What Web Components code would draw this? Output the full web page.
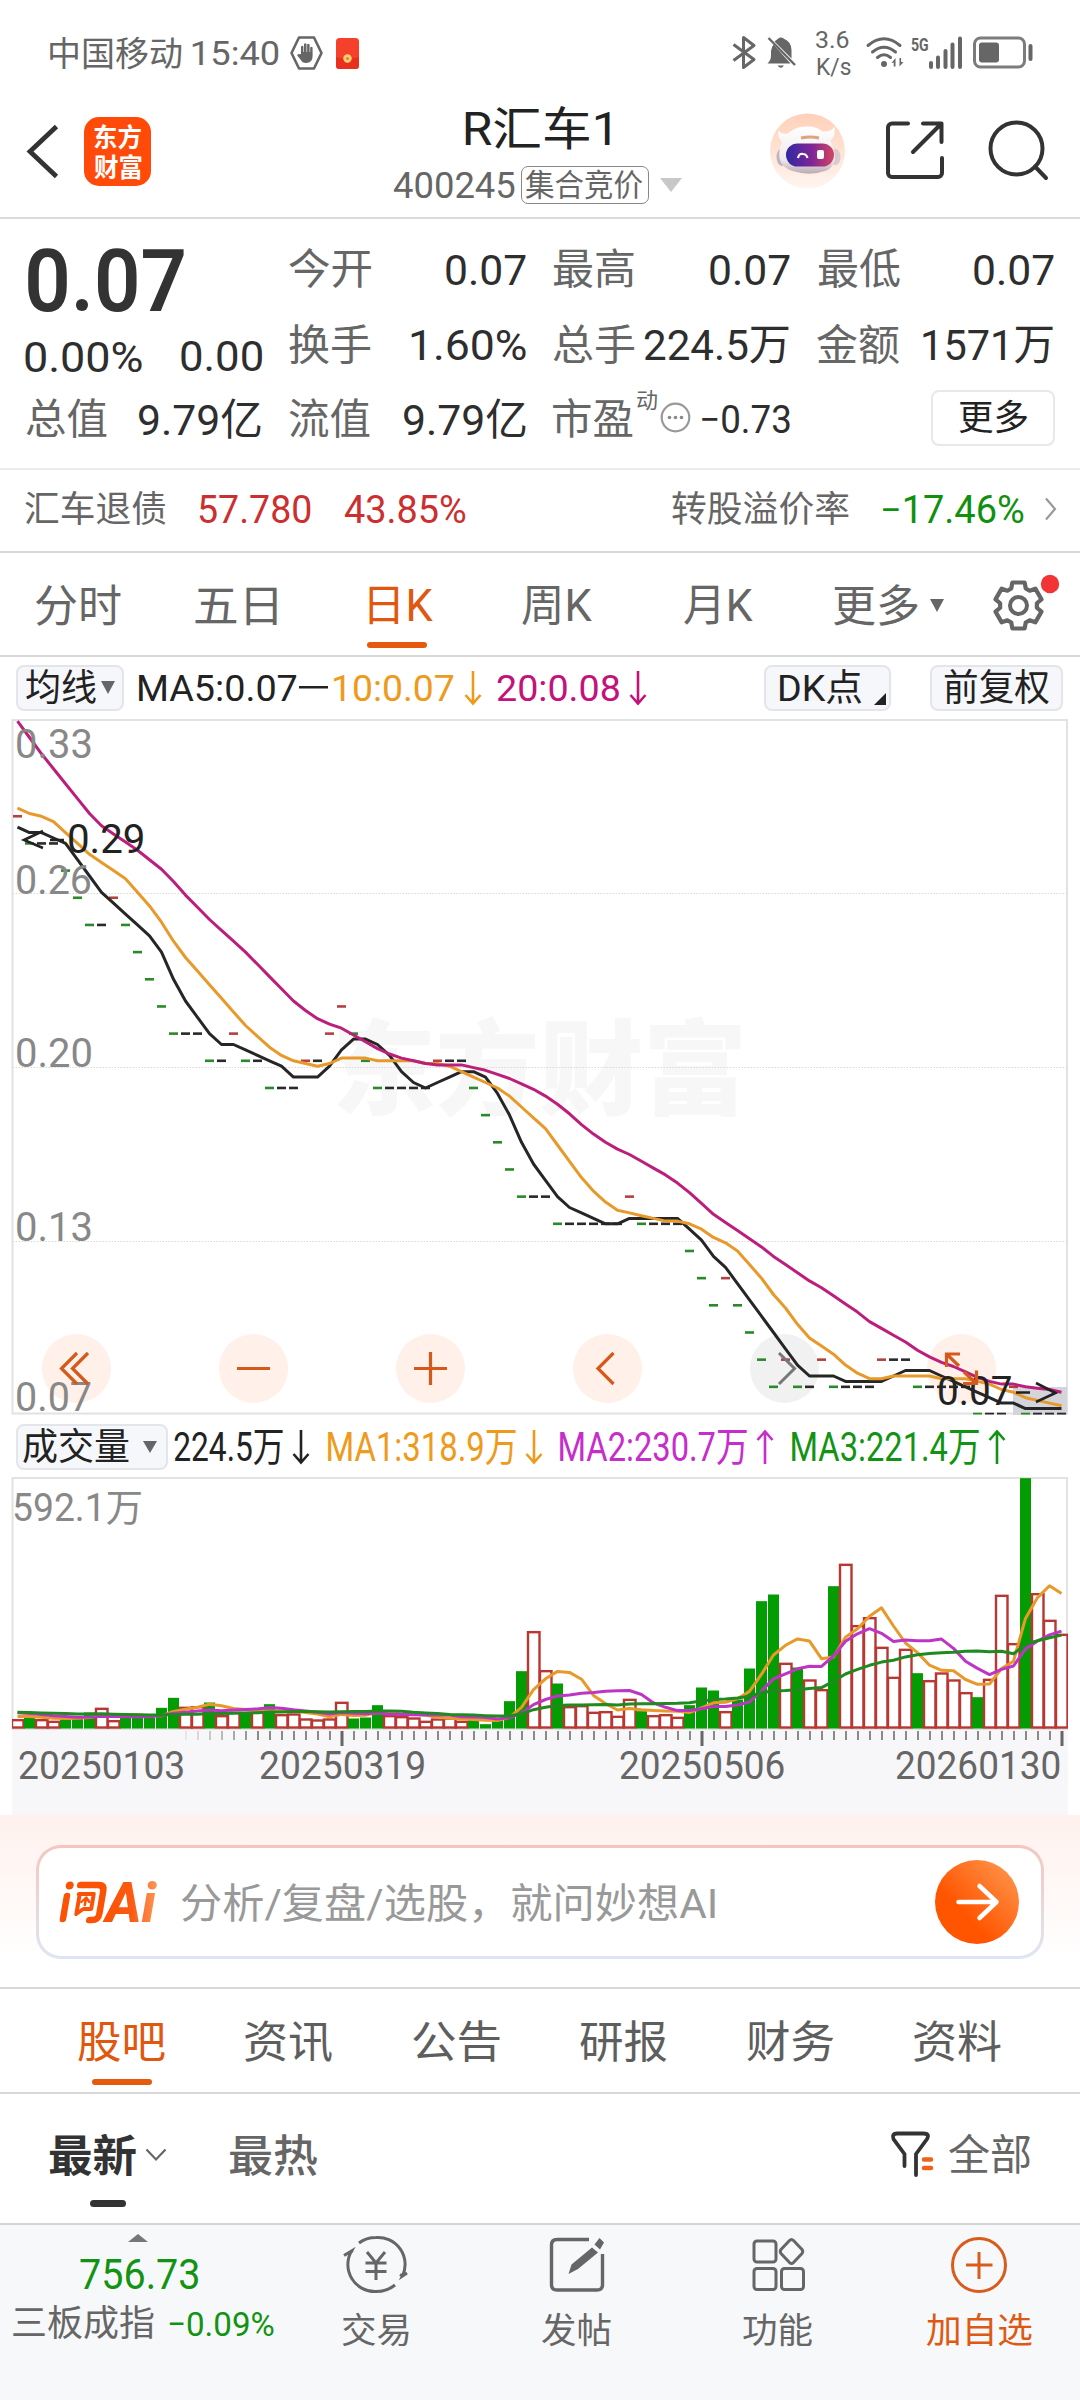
<!DOCTYPE html>
<html lang="zh-CN">
<head>
<meta charset="utf-8">
<title>R汇车1 400245</title>
<style>
html,body{margin:0;padding:0;background:#fff}
body{width:1080px;height:2400px;overflow:hidden;font-family:Roboto,"Noto Sans CJK SC",sans-serif;color:#333}
</style>
</head>
<body>
<stock-page></stock-page>
<script>
const FONT = 'Roboto,"Noto Sans CJK SC",sans-serif';
const ctx = document.createElement('canvas').getContext('2d');
function ink(text, size, weight, family) {
  ctx.font = `${weight} ${size}px ${family || FONT}`;
  const m = ctx.measureText(text);
  return { left: -m.actualBoundingBoxLeft, width: m.actualBoundingBoxRight + m.actualBoundingBoxLeft };
}
// SVG text whose visible glyphs span x1..x2 on the given baseline
function svgText(text, x1, x2, base, size, fill, weight = 400) {
  const k = ink(text, size, weight), s = (x2 - x1) / k.width;
  return `<text transform="translate(${x1 - k.left * s},${base}) scale(${s},1)" font-size="${size}" font-weight="${weight}" fill="${fill}">${text}</text>`;
}
// shorthand for a fitted label: text, gap before it, visible width, font size, colour, weight, vertical nudge
const T = (text, gap, w, size, color, weight = 400, dy = 0) =>
  `<fit-text gap="${gap}" w="${w}" size="${size}" color="${color}" weight="${weight}" dy="${dy}">${text}</fit-text>`;

class View extends HTMLElement {
  connectedCallback() {
    if (this.shadowRoot) return;
    this.attachShadow({ mode: 'open' }).innerHTML =
      `<style>:host{display:block;box-sizing:border-box}*{box-sizing:border-box}.row{display:flex;align-items:center}svg{display:block;flex:none;overflow:visible}${this.css()}</style>${this.html()}`;
  }
  css() { return ''; }
  html() { return ''; }
}

class FitText extends HTMLElement {
  connectedCallback() {
    if (this.shadowRoot) return;
    const a = n => this.getAttribute(n);
    const size = +a('size'), w = +a('w'), weight = a('weight') || 400;
    const text = this.textContent, k = ink(text, size, weight), s = w / k.width;
    const cjk = /^[\u4e00-\u9fff]+$/.test(text);
    const dy = +(a('dy') || 0) + size * (cjk ? 0.035 : 0.014);
    this.attachShadow({ mode: 'open' }).innerHTML = `<style>
      :host{display:block;flex:none;width:${w}px;height:${size}px;line-height:${size}px;margin-left:${a('gap') || 0}px;font-size:${size}px;font-weight:${weight};color:${a('color')};white-space:nowrap}
      span{display:inline-block;transform-origin:0 50%;transform:translate(${-k.left * s}px,${dy}px) scaleX(${s})}
    </style><span><slot></slot></span>`;
  }
}

class StatusBar extends View {
  css() { return `:host{height:106px}.row{height:106px;padding-left:50px}.net{margin-left:19px;display:flex;flex-direction:column;gap:3px;width:35px}`; }
  html() {
    const g = '#666';
    return `<div class="row">${T('中国移动', 0, 132, 34, g)}${T('15:40', 10, 87, 34, g)}
    <svg style="margin-left:11px" width="33" height="34" viewBox="0 0 33 34"><path d="M9 1.5h15l7.500 15.500L24 32.500H9L1.500 17z" fill="none" stroke="${g}" stroke-width="2.600" stroke-linejoin="round"/><path d="M11 18V10.500q1.200-1.500 2.400 0V16h.6V8q1.200-1.500 2.500 0v8h.6V8.500q1.200-1.500 2.500 0V16h.6v-4.500q1.200-1.500 2.400 0V20q0 7-6.600 7-3.600 0-5.500-3.500L7.200 19.500q.3-2.200 2.400-1.200z" fill="${g}"/></svg>
    <svg style="margin-left:13px" width="23" height="31" viewBox="0 0 23 31"><rect width="23" height="31" rx="3.500" fill="#f5402c"/><path d="M0 19q11.500 3.500 23 0v8.500a3.500 3.500 0 0 1-3.500 3.500h-16A3.500 3.500 0 0 1 0 27.500z" fill="#e92f1e"/><circle cx="11.500" cy="20.500" r="4.200" fill="#ffcf78"/><circle cx="11.500" cy="20.500" r="1.600" fill="#e8862c"/></svg>
    <svg style="margin-left:373px" width="24" height="34" viewBox="732 36 24 34"><path d="M733.500 44.500 754 59.500 743.500 67.500V37.500L754 45.500 733.500 60.500" fill="none" stroke="${g}" stroke-width="3" stroke-linejoin="round"/></svg>
    <svg style="margin-left:11px" width="30" height="34" viewBox="767 36 30 34"><path d="M767.500 63.500Q771 60.500 771 55V51Q771.500 47 773.500 44.500L790.500 63.500zM774.500 41.500 778 38.800Q780.500 36 784 38.800 791.500 42 791.500 50V58.500zM777.500 65.500h6.500q-3 4.500-6.500 0z" fill="${g}"/><path d="M768.500 38 795 65" stroke="${g}" stroke-width="2.400"/></svg>
    <div class="net">${T('3.6', 0, 33, 24, g)}${T('K/s', 1, 34, 24, g)}</div>
    <svg style="margin-left:15px" width="39" height="34" viewBox="866 36 39 34"><g fill="none" stroke="${g}" stroke-width="3" stroke-linecap="round"><path d="M868 45.500q16-13.500 32 0M872.500 52q11.500-9.500 23 0M877.500 57.500q6.500-5.500 13 0"/></g><circle cx="884" cy="64" r="3" fill="${g}"/><path d="M891.500 63l4-5v8.500h-1.800v-4zM903.500 62l-4 4.500v-8.500h1.600v4z" fill="${g}"/></svg>
    <svg style="margin-left:6px" width="51" height="34" viewBox="911 36 51 34" font-family='${FONT}'>${svgText('5G', 911, 928.5, 50.5, 18, g, 700)}<path d="M931 63v4M938 57.500V67M945.500 51V67M952.500 44.500V67M960 38.500V67" stroke="${g}" stroke-width="4" stroke-linecap="round"/></svg>
    <svg style="margin-left:11px" width="60" height="34" viewBox="974 36 60 34"><rect x="975.500" y="38" width="50" height="29" rx="6" fill="none" stroke="#7c7c7c" stroke-width="3"/><rect x="980" y="42.500" width="20" height="20" rx="3" fill="${g}"/><path d="M1031.500 46v13" stroke="${g}" stroke-width="4" stroke-linecap="round"/></svg>
    </div>`;
  }
}

class AppHeader extends View {
  css() { return `:host{height:113px;border-bottom:2px solid #dadada}.row{height:90px;padding-left:28px;align-items:flex-start}
    .logo{display:grid;place-content:center;width:67px;height:69px;margin:11px 0 0 25px;border-radius:15px;background:#ff4a0a}
    .title{width:290px;margin-left:242px}.t1{display:flex;height:44px;align-items:center;padding-left:72px}.t2{display:flex;height:37px;margin-top:16px;align-items:center}
    .tag{display:flex;align-items:center;height:38px;width:128px;margin-left:6px;border:1.500px solid #888;border-radius:7px}
    .tri{margin-left:11px;width:0;height:0;border:11.500px solid transparent;border-top:14px solid #c8c8c8;border-bottom:0}`; }
  html() {
    return `<div class="row"><svg style="margin-top:18px" width="31" height="56" viewBox="28 124 31 56"><path d="M56.500 126.500 30 151.500 56.500 176.500" fill="none" stroke="#333" stroke-width="4.800"/></svg>
    <div class="logo">${T('东方', 0, 47, 26, '#fff', 700)}<div style="height:4px"></div>${T('财富', 0, 48, 26, '#fff', 700)}</div>
    <div class="title"><div class="t1">${T('R汇车1', 0, 145, 46, '#222', 400, 0)}</div><div class="t2">${T('400245', 0, 122, 37, '#666')}<div class="tag">${T('集合竞价', 3, 118, 31, '#666')}</div><div class="tri"></div></div></div>
    <svg style="margin:7px 0 0 86px" width="76" height="76" viewBox="770 113 76 76"><defs><linearGradient id="a" x2="0" y2="1"><stop stop-color="#ffd0b8"/><stop offset=".5" stop-color="#ffe3d5"/><stop offset="1" stop-color="#fff5f0"/></linearGradient><linearGradient id="b"><stop stop-color="#3027a4"/><stop offset=".55" stop-color="#812695"/><stop offset="1" stop-color="#d44660"/></linearGradient><linearGradient id="c" x2="0" y2="1"><stop stop-color="#fff"/><stop offset=".7" stop-color="#f0e9ec"/><stop offset="1" stop-color="#b9abb3"/></linearGradient></defs>
      <circle cx="808.500" cy="151" r="37.500" fill="url(#a)"/><ellipse cx="783" cy="157" rx="5.500" ry="9" fill="#c0b3bf"/><ellipse cx="836.500" cy="157" rx="5" ry="8" fill="#d8cbd0"/>
      <path d="M783 142q-5-5-3.500-12 3 5 9 3.500 6-5 13-6.500 15-2 22 4.500 9 .5 12-5 1.500 9-4 14l4 12q2 13-8 18-16 6-34 .5-11-3-13-13-1-9 2.500-16z" fill="url(#c)"/><rect x="787" y="143.500" width="48" height="23" rx="11.500" fill="url(#b)"/>
      <path d="M799 158q1-5 5-4 3.500 0 4.500 4" fill="none" stroke="#fff" stroke-width="2.200"/><rect x="818" y="150" width="7" height="9" rx="2" fill="#fff"/><path d="M802 138q9-2 18 0" stroke="#dba57d" stroke-width="3" fill="none"/></svg>
    <svg style="margin:14px 0 0 41px" width="58" height="60" viewBox="888 121 58 60"><g fill="none" stroke="#333" stroke-width="4" stroke-linecap="round" stroke-linejoin="round"><path d="M910 124.500h-16a4 4 0 0 0-4 4v45.500a4 4 0 0 0 4 4h46a4 4 0 0 0 4-4V159"/><path d="M925 124.500h18.500V143M942 126 915 153"/></g></svg>
    <svg style="margin:15px 0 0 45px" width="60" height="60" viewBox="991 121 60 60"><g fill="none" stroke="#333" stroke-width="4"><circle cx="1018.500" cy="148.500" r="26"/><path d="M1037 166.500 1048 178" stroke-linecap="round"/></g></svg></div>`;
  }
}

class QuotePanel extends View {
  css() { return `:host{height:251px;border-bottom:2px solid #ececec;padding-left:25px}.top{display:flex;height:152px}.left{width:263px}.more{display:flex;align-items:center;width:124px;height:56px;margin:-2px 0 0 141px;border:2px solid #e8e8e8;border-radius:8px}`; }
  html() {
    const l = '#666', v = '#2e2e2e';
    return `<div class="top"><div class="left"><div class="row" style="height:122px">${T('0.07', 3, 156, 88, '#333', 600)}</div><div class="row" style="height:30px">${T('0.00%', 0, 117, 43, v)}${T('0.00', 39, 81, 43, v, 400, -.5)}</div></div>
    <div><div class="row" style="height:100px">${T('今开', 1, 82, 42, l)}${T('0.07', 75, 80, 43, v)}${T('最高', 27, 81, 42, l)}${T('0.07', 76, 80, 43, v)}${T('最低', 28, 82, 42, l)}${T('0.07', 74, 80, 43, v)}</div>
    <div class="row" style="height:52px">${T('换手', 1, 82, 42, l)}${T('1.60%', 40, 115, 43, v, 400, -1)}${T('总手', 27, 82, 42, l)}${T('224.5万', 9, 145, 43, v, 400, -1)}${T('金额', 28, 82, 42, l)}${T('1571万', 24, 130, 43, v, 400, -1)}</div></div></div>
    <div class="row" style="height:96px">${T('总值', 1, 81, 42, l)}${T('9.79亿', 32, 122, 43, v)}${T('流值', 28, 81, 42, l)}${T('9.79亿', 34, 122, 43, v)}${T('市盈', 27, 80, 42, l)}${T('动', 4, 20, 22, l, 400, -19)}
    <svg style="margin:-3px 0 0 3px" width="31" height="31" viewBox="0 0 31 31"><circle cx="15.500" cy="15.500" r="13.800" fill="none" stroke="#999" stroke-width="2.200"/><g fill="#888"><circle cx="9.500" cy="15.500" r="1.800"/><circle cx="15.500" cy="15.500" r="1.800"/><circle cx="21.500" cy="15.500" r="1.800"/></g></svg>
    ${T('−0.73', 11, 88, 39, v)}<div class="more">${T('更多', 26, 69, 35, '#222', 400, -1)}</div></div>`;
  }
}

class BondRow extends View {
  css() { return `:host{height:83px;border-bottom:2px solid #d8d8d8}.row{height:78px;padding-left:25px}`; }
  html() {
    return `<div class="row">${T('汇车退债', 0, 141, 36, '#666')}${T('57.780', 33, 112, 38, '#cc2f2f')}${T('43.85%', 33, 122, 38, '#cc2f2f')}${T('转股溢价率', 206, 177, 36, '#666')}${T('−17.46%', 34, 141, 38, '#0f910f')}
    <svg style="margin-left:21px" width="12" height="24" viewBox="0 0 12 24"><path d="M1 1.500 10 12 1 22.500" fill="none" stroke="#999" stroke-width="2.200"/></svg></div>`;
  }
}

class PeriodTabs extends View {
  css() { return `:host{height:104px;border-bottom:2px solid #d8d8d8}.row{height:104px;padding-left:35px}.on{position:relative;margin-left:92px}.on::after{content:"";position:absolute;left:-2px;top:59px;width:60px;height:6px;border-radius:3px;background:#e55a0c}.tri{margin-left:12px;border:7px solid transparent;border-top:13px solid #666;border-bottom:0}`; }
  html() {
    const g = '#666', pts = [];
    for (let i = 0; i < 6; i++) for (const [r, d] of [[18.5, -23], [23.8, -15], [23.8, 15], [18.5, 23]]) {
      const a = (i * 60 - 90 + d) * Math.PI / 180;
      pts.push((26.5 + r * Math.cos(a)).toFixed(2) + ',' + (26.5 + r * Math.sin(a)).toFixed(2));
    }
    return `<div class="row">${T('分时', 0, 86, 44, g)}${T('五日', 74, 82, 44, g)}<div class="on">${T('日K', 0, 64, 44, '#e0570f')}</div>${T('周K', 89, 70, 44, g)}${T('月K', 92, 69, 44, g)}${T('更多', 81, 84, 44, g)}<div class="tri"></div>
    <svg style="margin-left:48px" width="53" height="53" viewBox="0 0 53 53"><polygon points="${pts.join(' ')}" fill="none" stroke="${g}" stroke-width="4.200" stroke-linejoin="round"/><circle cx="26.500" cy="26.500" r="8.500" fill="none" stroke="${g}" stroke-width="4"/><circle cx="58" cy="5" r="9.200" fill="#f23434"/></svg></div>`;
  }
}

class ChipLabel extends View {
  css() { return `:host{display:flex;align-items:center;flex:none;height:46px;border:2px solid #e3e5ea;border-radius:8px;background:#f6f7fa}`; }
  html() { return '<slot></slot>'; }
}

class LegendArrow extends View {
  css() { return `:host{flex:none;width:18px;height:36px}`; }
  html() {
    const c = this.getAttribute('color'), up = this.hasAttribute('up');
    return `<svg width="18" height="36" viewBox="0 0 18 36"><path ${up ? 'transform="rotate(180 9 18)"' : ''} d="M9 1V33M1.500 25 9 33.500 16.500 25" fill="none" stroke="${c}" stroke-width="2.600"/></svg>`;
  }
}

class MaLegend extends View {
  css() { return `:host{height:62px}.row{height:61px;padding-left:16px}.tri{margin-left:5px;border:7px solid transparent;border-top:13px solid #666;border-bottom:0}`; }
  html() {
    const k = '#222', y = '#ee9a1c', m = '#c3127c';
    return `<div class="row"><chip-label style="width:108px">${T('均线', 8, 70, 37, k)}<div class="tri"></div></chip-label>${T('MA5:0.07', 15, 158, 37, k)}<svg style="margin-left:2px" width="29" height="3"><rect width="29" height="2.500" fill="${k}"/></svg>${T('10:0.07', 6, 120, 37, y)}<legend-arrow color="${y}" style="margin-left:10px"></legend-arrow>${T('20:0.08', 15, 122, 37, m)}<legend-arrow color="${m}" style="margin-left:10px"></legend-arrow>
    <chip-label style="margin-left:117px;width:127px">${T('DK点', 14, 82, 37, k)}<svg style="margin:22px 0 0 12px" width="12" height="12"><path d="M12 0V12H0z" fill="${k}"/></svg></chip-label><chip-label style="margin-left:39px;width:133px">${T('前复权', 12, 105, 37, k)}</chip-label></div>`;
  }
}

// closing levels in cents with the mark's colour: r up, g down, k unchanged
const SESSIONS = '29r 28g 28k 28k 27g 26g 25g 25k 26r 25g 24g 23g 22g 21g 21k 21k 20g 20k 21r 20g 20k 19g 19k 19k 20r 20k 21r 22r 21g 20g 19g 19k 19k 19k 19k 20r 20k 20k 19g 18g 17g 16g 15g 15k 15k 14g 14k 14k 14k 14k 14k 15r 14g 14k 14k 14k 13g 12g 11g 12r 11g 10g 9g 8g 9r 8g 8k 9r 8g 8k 8k 8k 9r 9k 9k 8g 8k 8k 8k 8k 7g 7k 7k 8r 7g 7k 7k 7k'.split(' ');
const CLOSES = SESSIONS.map(s => parseInt(s));
const PRIOR = [40, 40, 39, 38, 37, 36, 34, 32, 31, 30, 30, 29, 30, 31, 30, 29, 28, 29, 28];
const cx = i => 17.5 + 12 * i;
function average(prior, data, n) {
  const all = prior.concat(data);
  return data.map((_, i) => { const e = i + prior.length + 1; return all.slice(e - n, e).reduce((a, b) => a + b) / n; });
}
const line = (vals, y, color) => `<polyline points="${vals.map((v, i) => cx(i) + ',' + y(v).toFixed(1)).join(' ')}" fill="none" stroke="${color}" stroke-width="3" stroke-linejoin="round"/>`;

class PriceChart extends View {
  css() { return `:host{height:697px}`; }
  html() {
    const y = v => 1414 - 27.17 * (v - 7), col = { r: '#b5413f', g: '#288a28', k: '#2a2a2a' };
    const g = '#888', o = '#d5591a', b = '#fff0e9';
    const marks = SESSIONS.map((s, i) => `<rect x="${cx(i) - 4.5}" y="${y(CLOSES[i]) - 1.3}" width="9" height="${CLOSES[i] === 7 ? 1.8 : 2.6}" fill="${col[s.slice(-1)]}"/>`).join('');
    const disc = (x, c) => `<circle cx="${x}" cy="1368.500" r="34.500" fill="${c}"/>`;
    return `<svg width="1080" height="697" viewBox="0 719 1080 697" font-family='${FONT}'>
    ${svgText('东方财富', 337, 741, 1107, 103, '#f7f7f7', 900)}
    <path d="M12.500 893.500H1067M12.500 1067.500H1067M12.500 1241.500H1067" stroke="#d9d9d9" stroke-width="1.200" stroke-dasharray="1.500 1.500"/>
    <path d="M1067 720H12.500V1413.500H1067z" fill="none" stroke="#e2e2e2" stroke-width="2"/>
    ${disc(76.5, b)}${disc(253.5, b)}${disc(430.5, b)}${disc(607.5, b)}${disc(784.5, '#f1f1f1')}${disc(961.5, b)}
    <rect x="1013" y="1387" width="54" height="28" fill="#d3d5db"/>
    <clipPath id="box"><rect x="12" y="719" width="1056" height="697"/></clipPath>
    <g clip-path="url(#box)">${marks}${line(average(PRIOR, CLOSES, 5), y, '#262626')}${line(average(PRIOR, CLOSES, 10), y, '#e8992a')}${line(average(PRIOR, CLOSES, 20), y, '#bb1f7b')}</g>
    ${svgText('0.33', 17, 91, 758, 41, g)}${svgText('0.26', 17, 91, 893.5, 41, g)}${svgText('0.20', 17, 91, 1067, 41, g)}${svgText('0.13', 17, 91, 1240.5, 41, g)}${svgText('0.07', 17, 91, 1410.5, 41, g)}
    <g fill="none" stroke="#222" stroke-width="2.600"><path d="M43 831 24 840 43 848M50 840H64M1016 1392.500H1030M1036 1383 1055.500 1393 1036 1402"/></g>
    ${svgText('0.29', 69, 143, 852.5, 40, '#222')}${svgText('0.07', 939, 1011, 1405, 40, '#222')}
    <g fill="none" stroke="${o}" stroke-width="3.200"><path d="M77 1353 61.500 1368.500 77 1384M88 1353 72.500 1368.500 88 1384M237 1368.500H270M414 1368.500H447M430.500 1352V1385M613.500 1353 598 1368.500 613.500 1384"/><path d="M946.500 1367V1354H960M946.500 1354 959 1366M976.500 1370.500V1383.500H963M964 1372 976.500 1383.500"/></g>
    <path d="M779 1353 794.500 1368.500 779 1384" fill="none" stroke="#777" stroke-width="3"/></svg>`;
  }
}

class VolumeLegend extends View {
  css() { return `:host{height:61px}.row{height:61px;padding-left:16px}.tri{margin-left:14px;border:7px solid transparent;border-top:12px solid #666;border-bottom:0}`; }
  html() {
    const k = '#222', y = '#ee9a1c', m = '#c62dcb', g = '#139313';
    const arrow = (c, up, gap) => `<legend-arrow color="${c}" ${up} style="margin-left:${gap}px"></legend-arrow>`;
    return `<div class="row"><chip-label style="width:152px">${T('成交量', 5, 106, 37, k)}<div class="tri"></div></chip-label>${T('224.5万', 6, 109, 40, k)}${arrow(k, '', 9)}${T('MA1:318.9万', 18, 188, 40, y)}${arrow(y, '', 9)}${T('MA2:230.7万', 17, 187, 40, m)}${arrow(m, 'up', 9)}${T('MA3:221.4万', 18, 187, 40, g)}${arrow(g, 'up', 9)}</div>`;
  }
}

// volume of each session in bar-height units (751 = the 592.1万 peak)
const VOLUMES = [28, 38, 28, 23, 33, 33, 48, 62, 25, 33, 37, 33, 62, 92, 65, 67, 78, 40, 50, 50, 50, 73, 43, 45, 30, 27, 30, 80, 30, 33, 70, 40, 37, 33, 23, 30, 33, 23, 25, 13, 25, 82, 172, 292, 175, 135, 67, 70, 50, 52, 38, 89, 52, 40, 43, 35, 70, 123, 114, 52, 87, 180, 382, 402, 197, 183, 147, 118, 427, 494, 310, 334, 245, 155, 239, 166, 145, 168, 147, 109, 94, 149, 401, 256, 751, 406, 326, 284];
const DOWN_BARS = new Set([1, 4, 5, 6, 9, 10, 11, 12, 13, 16, 19, 21, 28, 29, 30, 38, 39, 40, 41, 42, 45, 52, 56, 57, 58, 60, 61, 62, 63, 65, 68, 75, 80, 84]);

class VolumeChart extends View {
  css() { return `:host{height:338px}`; }
  html() {
    const bottom = 1728.5, y = v => bottom - v / 3;
    const prior = [50, 50, 50, 50, 50, 50, 50, 50, 50, 50, 58, 58, 58, 58, 58, 38, 38, 38, 38];
    const bars = VOLUMES.map((v, i) => DOWN_BARS.has(i)
      ? `<rect x="${cx(i) - 5.5}" y="${y(v)}" width="11" height="${v / 3}" fill="#039d03"/>`
      : `<rect x="${cx(i) - 5.5}" y="${y(v) + 1}" width="11.500" height="${Math.max(v / 3 - 2, 2)}" fill="#fff" stroke="#b93633" stroke-width="2.400"/>`).join('');
    let ticks = '';
    for (let i = 14; i < 88; i++) {
      const major = i === 27 || i === 57 || i === 87;
      ticks += `<rect x="${cx(i) - (major ? 1.5 : 1) + .5}" y="1731" width="${major ? 3 : 2}" height="${major ? 15 : 9}" fill="${major ? '#666' : '#8a8a8a'}" opacity="${Math.min(1, (i - 13) / 7)}"/>`;
    }
    const d = '#666';
    return `<svg width="1080" height="338" viewBox="0 1477 1080 338" font-family='${FONT}'>
    <rect x="12" y="1730" width="1056" height="85" fill="#f7f7fa"/><path d="M1067 1478H12.500V1729H1067z" fill="none" stroke="#e2e2e2" stroke-width="2"/>
    <clipPath id="v"><rect x="12" y="1477" width="1056" height="260"/></clipPath>
    <g clip-path="url(#v)">${bars}${line(average(prior, VOLUMES, 5), y, '#e8992a')}${line(average(prior, VOLUMES, 10), y, '#be35c6')}${line(average(prior, VOLUMES, 20), y, '#1f8a1f')}</g>${ticks}
    ${svgText('592.1万', 14, 141, 1521, 38, '#888')}${svgText('20250103', 19, 183, 1778.5, 38, d)}${svgText('20250319', 260, 424, 1778.5, 38, d)}${svgText('20250506', 620, 784, 1778.5, 38, d)}${svgText('20260130', 896, 1060, 1778.5, 38, d)}</svg>`;
  }
}

class AskBar extends View {
  css() { return `:host{height:174px;padding:30px 36px 0;background:linear-gradient(#fff1ed,#fff 85%);border-bottom:2px solid #d8d8d8}
    .box{display:flex;align-items:center;height:114px;padding-left:21px;border:3px solid transparent;border-radius:25px;background:linear-gradient(#fff,#fff) padding-box,linear-gradient(#f5c6bf,#dee6f2) border-box}`; }
  html() {
    return `<div class="box"><svg width="98" height="44" viewBox="60 1880 98 44" font-family='${FONT}'><defs><linearGradient id="q" gradientUnits="userSpaceOnUse" x1="0" y1="0" x2="52" y2="0"><stop stop-color="#fb5206"/><stop offset=".5" stop-color="#fc5a12"/><stop offset="1" stop-color="#ff9657"/></linearGradient></defs>
      <g transform="translate(325.500 0) skewX(-9.700)"><g fill="none" stroke="#fb5206" stroke-width="6.500" stroke-linecap="round" stroke-linejoin="round"><path d="M65.500 1896V1919M77 1885H95Q101 1885 101 1891V1914Q101 1920 95 1920H92"/><path d="M77 1894H92V1909H84L78 1914V1894" stroke-width="4"/><path d="M81 1902l4-4.500 4 4.500M85 1898v7" stroke-width="2.500"/></g><circle cx="66.500" cy="1885.500" r="4" fill="#fb5206"/></g>
      <text transform="translate(105.500 1921.500) scale(1 1)" font-size="55" font-weight="800" font-style="italic" fill="url(#q)">Ai</text></svg>
    ${T('分析/复盘/选股，就问妙想AI', 23, 534, 41, '#999', 400, 1)}
    <svg style="margin-left:220px" width="84" height="84" viewBox="0 0 84 84"><defs><linearGradient id="p" x1="0" y1="1" x2="1" y2="0"><stop offset=".35" stop-color="#ff5500"/><stop offset="1" stop-color="#ff9d55"/></linearGradient></defs><circle cx="42" cy="42" r="42" fill="url(#p)"/><path d="M23.500 42H61M44.500 26 61.500 42 44.500 58" fill="none" stroke="#fff" stroke-width="4.500" stroke-linecap="round" stroke-linejoin="round"/></svg></div>`;
  }
}

class SectionTabs extends View {
  css() { return `:host{height:105px;border-bottom:2px solid #d8d8d8}.row{height:103px;padding-left:78px}.on{position:relative}.on::after{content:"";position:absolute;left:14px;top:60px;width:60px;height:6px;border-radius:3px;background:#e55a0c}`; }
  html() {
    return `<div class="row"><div class="on">${T('股吧', 0, 87, 44, '#e0570f')}</div>${['资讯', '公告', '研报', '财务', '资料'].map(t => T(t, 80.3, 87, 44, '#5e5e5e')).join('')}</div>`;
  }
}

class FeedFilter extends View {
  css() { return `:host{height:131px;border-bottom:2px solid #d3d5d8}.row{height:121px;padding-left:49px}.on{position:relative}.on::after{content:"";position:absolute;left:41px;top:67px;width:36px;height:7px;border-radius:3.500px;background:#333}`; }
  html() {
    return `<div class="row"><div class="on">${T('最新', 0, 87, 44, '#333', 700)}</div><svg style="margin-left:9px" width="22" height="14" viewBox="0 0 22 14"><path d="M1.500 1.500 11 11.500 20.500 1.500" fill="none" stroke="#666" stroke-width="2.200"/></svg>${T('最热', 62, 88, 44, '#666', 500)}
    <svg style="margin-left:573px" width="45" height="46" viewBox="890 2132 45 46"><path d="M904.500 2166V2154L893.500 2139Q891.500 2133.500 897 2133.500H923.500Q930 2133.500 927 2139L916 2154V2175" fill="none" stroke="#333" stroke-width="3.800" stroke-linecap="round"/><path d="M924 2159.500h7M924 2168h7" stroke="#f2601a" stroke-width="4.500" stroke-linecap="round"/></svg>${T('全部', 14, 81, 42, '#666')}</div>`;
  }
}

class NavItem extends View {
  css() { return `:host{display:flex;flex-direction:column;align-items:center;width:201px;padding-top:9px}.l{margin-top:13px}`; }
  html() { return `<slot></slot><div class="l">${T(this.getAttribute('label'), 0, this.getAttribute('w'), 35, this.getAttribute('color') || '#666', 400, 4)}</div>`; }
}

class BottomNav extends View {
  css() { return `:host{height:176px;background:#f7f8fa;display:flex}.idx{width:275px}.up{margin:9px 0 0 128px;width:0;border:10px solid transparent;border-bottom:8px solid #777;border-top:0}`; }
  html() {
    const g = '#666', o = '#d95c1c';
    return `<div class="idx"><div class="up"></div><div class="row" style="height:66px">${T('756.73', 80, 118, 42, '#139313', 400, -1)}</div><div class="row" style="height:32px">${T('三板成指', 13, 141, 36, g, 400, -1)}${T('−0.09%', 15, 105, 34, '#139313')}</div></div>
    <nav-item label="交易" w="67"><svg width="66" height="62" viewBox="343 2233 66 62"><g fill="none" stroke="${g}" stroke-width="3"><path d="M359 2242Q366 2236.500 376 2236.500A27 27 0 0 1 402.500 2275L407 2272M402.500 2275 400 2273.500M395 2284Q387 2290.500 376 2290.500A27 27 0 0 1 351.500 2250L344 2254.500M351.500 2250 353 2251"/><path d="M367 2251 376 2262 385 2251M365.500 2262H386.500M365.500 2270.500H386.500M376 2262V2279"/></g></svg></nav-item>
    <nav-item label="发帖" w="69"><svg width="58" height="62" viewBox="548 2233 58 62"><path d="M589 2238.500H557Q551.500 2238.500 551.500 2244V2284Q551.500 2289 557 2289H597Q602.500 2289 602.500 2284V2253" fill="none" stroke="${g}" stroke-width="3.400"/><path d="M592 2246.500 598 2251.500 578 2268 568.500 2273 571.500 2263.500zM594.500 2243.500 599.500 2237 604 2241.500 600 2248.500z" fill="${g}"/></svg></nav-item>
    <nav-item label="功能" w="69"><svg width="54" height="62" viewBox="751 2233 54 62"><g fill="none" stroke="${g}" stroke-width="3"><rect x="754" y="2240" width="22" height="21" rx="3"/><rect x="754" y="2267.500" width="22" height="21" rx="3"/><rect x="781.500" y="2267.500" width="22" height="21" rx="3"/><path d="M789.500 2239.500q2-2 4 0l8.500 9q1.500 2 0 4l-8.500 9q-2 2-4 0l-8.500-9q-1.500-2 0-4z"/></g></svg></nav-item>
    <nav-item label="加自选" w="106" color="#dc5a14"><svg width="58" height="62" viewBox="950 2233 58 62"><g fill="none" stroke="${o}" stroke-width="3"><circle cx="979" cy="2264" r="26.500"/><path d="M966 2264H992.500M979 2251V2278"/></g></svg></nav-item>`;
  }
}

class StockPage extends View {
  css() { return `:host{width:1080px}`; }
  html() {
    return ['status-bar', 'app-header', 'quote-panel', 'bond-row', 'period-tabs', 'ma-legend', 'price-chart', 'volume-legend', 'volume-chart', 'ask-bar', 'section-tabs', 'feed-filter', 'bottom-nav'].map(n => `<${n}></${n}>`).join('');
  }
}

Object.entries({
  'fit-text': FitText, 'chip-label': ChipLabel, 'legend-arrow': LegendArrow, 'nav-item': NavItem,
  'status-bar': StatusBar, 'app-header': AppHeader, 'quote-panel': QuotePanel, 'bond-row': BondRow, 'period-tabs': PeriodTabs,
  'ma-legend': MaLegend, 'price-chart': PriceChart, 'volume-legend': VolumeLegend, 'volume-chart': VolumeChart,
  'ask-bar': AskBar, 'section-tabs': SectionTabs, 'feed-filter': FeedFilter, 'bottom-nav': BottomNav, 'stock-page': StockPage
}).forEach(([n, c]) => customElements.define(n, c));
</script>
</body>
</html>
